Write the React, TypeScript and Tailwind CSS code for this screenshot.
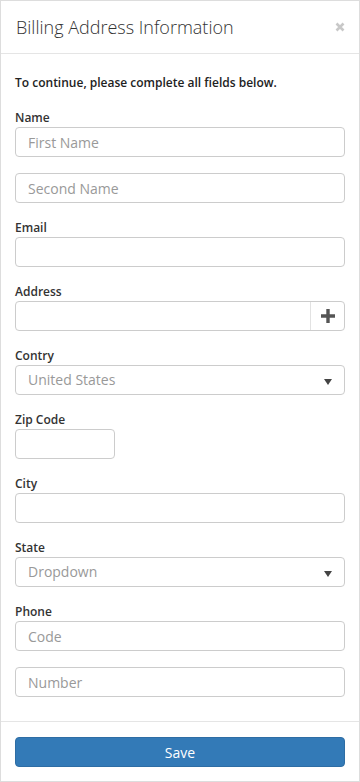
import React from 'react';

const inputCls =
	'block w-full h-[30px] rounded-[4px] border border-[#cccccc] bg-white px-3 text-[14px] text-[#555] placeholder:text-[#999] outline-none';

const Label: React.FC<{ children: React.ReactNode }> = ({ children }) => (
	<div className="h-[18px] text-[12px] leading-[18px] font-semibold text-[#333]">{children}</div>
);

const Caret = () => (
	<svg width="8" height="6" viewBox="0 0 8 6" className="absolute right-[12px] top-[13px]">
		<path d="M0 0 H8 L4 6 Z" fill="#444" />
	</svg>
);

const FakeSelect: React.FC<{ value: string }> = ({ value }) => (
	<div className="relative h-[30px] rounded-[4px] border border-[#cccccc] bg-white px-3 text-[14px] leading-[28px] text-[#999]">
		{value}
		<Caret />
	</div>
);

const App: React.FC = () => {
	return (
		<div className="w-[360px] h-[782px] bg-white font-['Open_Sans',sans-serif]">
			<div className="w-[360px] h-[782px] border border-[#dddddd] flex flex-col">
				{/* Header */}
				<div className="h-[53px] shrink-0 border-b border-[#e5e5e5] flex items-center justify-between pl-[15px] pr-[14px]">
					<h1 className="text-[18px] font-light text-[#333] leading-none">Billing Address Information</h1>
					<svg width="10" height="10" viewBox="0 0 10 10">
						<path d="M1.5 1.5 L8.5 8.5 M8.5 1.5 L1.5 8.5" stroke="#c8c8c8" strokeWidth="2.6" />
					</svg>
				</div>

				{/* Body */}
				<div className="flex-1 px-[14px] pt-[20px]">
					<p className="text-[12px] leading-[17px] font-semibold text-[#222]">
						To continue, please complete all fields below.
					</p>

					<div className="mt-[18px]">
						<Label>Name</Label>
						<input className={inputCls} placeholder="First Name" />
						<input className={inputCls + ' mt-[16px]'} placeholder="Second Name" />
					</div>

					<div className="mt-[16px]">
						<Label>Email</Label>
						<input className={inputCls} />
					</div>

					<div className="mt-[16px]">
						<Label>Address</Label>
						<div className="flex h-[30px] rounded-[4px] border border-[#cccccc] bg-white">
							<input className="flex-1 min-w-0 bg-transparent px-3 text-[14px] outline-none" />
							<div className="w-[34px] border-l border-[#e2e2e2] flex items-center justify-center">
								<svg width="14" height="14" viewBox="0 0 14 14">
									<path d="M7 0 V14 M0 7 H14" stroke="#555" strokeWidth="3.4" />
								</svg>
							</div>
						</div>
					</div>

					<div className="mt-[16px]">
						<Label>Contry</Label>
						<FakeSelect value="United States" />
					</div>

					<div className="mt-[16px]">
						<Label>Zip Code</Label>
						<input className={inputCls.replace('w-full', 'w-[100px]')} />
					</div>

					<div className="mt-[16px]">
						<Label>City</Label>
						<input className={inputCls} />
					</div>

					<div className="mt-[16px]">
						<Label>State</Label>
						<FakeSelect value="Dropdown" />
					</div>

					<div className="mt-[16px]">
						<Label>Phone</Label>
						<input className={inputCls} placeholder="Code" />
						<input className={inputCls + ' mt-[16px]'} placeholder="Number" />
					</div>
				</div>

				{/* Footer */}
				<div className="shrink-0 border-t border-[#e5e5e5] px-[14px] pt-[15px] pb-[14px]">
					<button className="w-full h-[30px] rounded-[4px] border border-[#2e6da4] bg-[#337ab7] text-[14px] text-white">
						Save
					</button>
				</div>
			</div>
		</div>
	);
};

export default App;
